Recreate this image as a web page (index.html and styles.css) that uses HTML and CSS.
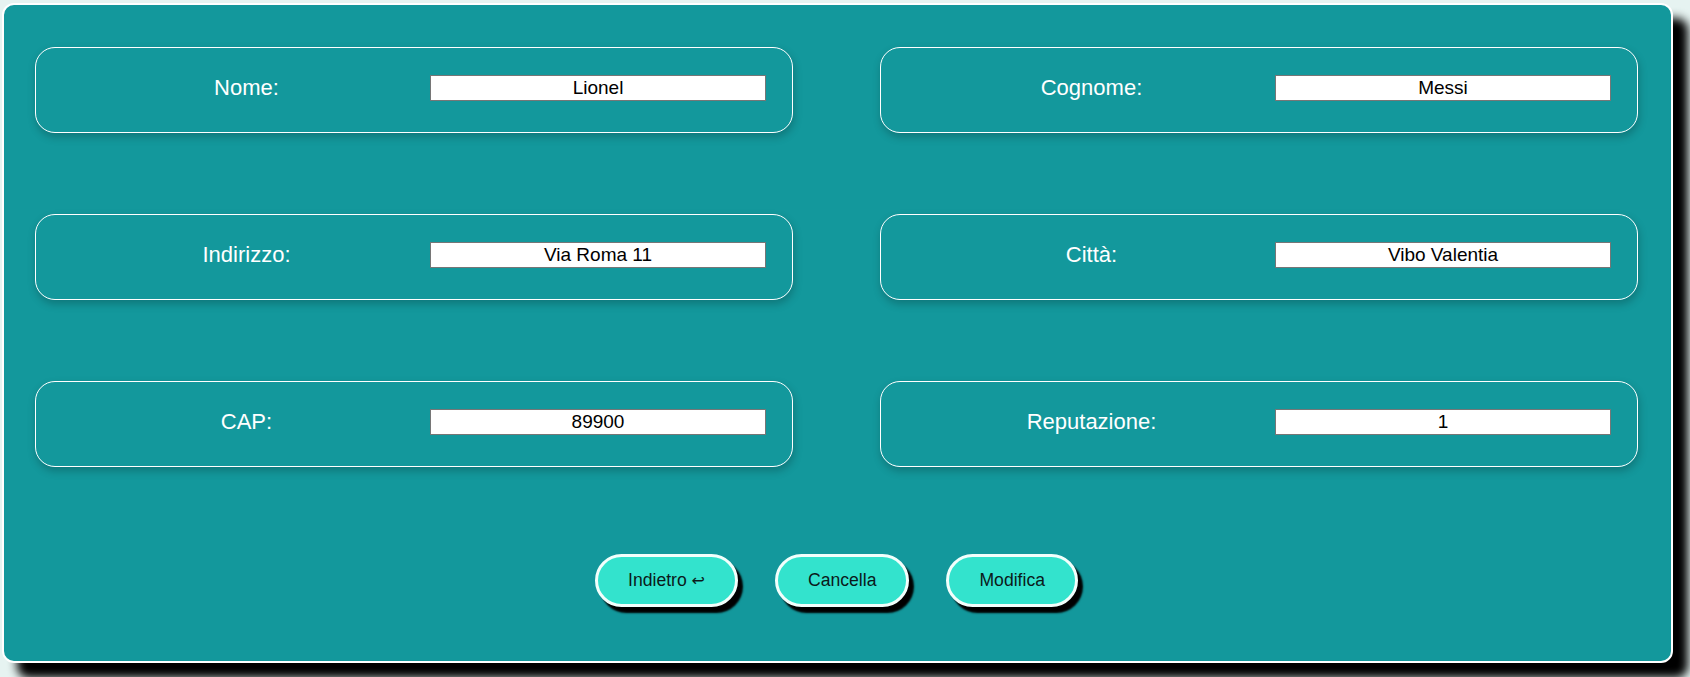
FILE: index.html
```html
<!DOCTYPE html>
<html lang="it">
<head>
<meta charset="utf-8">
<title>Modifica cliente</title>
<link rel="stylesheet" href="styles.css">
</head>
<body>
<form class="card">
  <div class="grid">
    <div class="field"><label class="label">Nome:</label><input class="input" type="text" value="Lionel"></div>
    <div class="field"><label class="label">Cognome:</label><input class="input" type="text" value="Messi"></div>
    <div class="field"><label class="label">Indirizzo:</label><input class="input" type="text" value="Via Roma 11"></div>
    <div class="field"><label class="label">Città:</label><input class="input" type="text" value="Vibo Valentia"></div>
    <div class="field"><label class="label">CAP:</label><input class="input" type="text" value="89900"></div>
    <div class="field"><label class="label">Reputazione:</label><input class="input" type="text" value="1"></div>
  </div>
  <div class="actions">
    <button type="button" class="btn">Indietro <span class="arrow">↩</span></button>
    <button type="button" class="btn">Cancella</button>
    <button type="button" class="btn">Modifica</button>
  </div>
</form>
</body>
</html>
```

FILE: styles.css
```css
html, body {
  margin: 0;
  padding: 0;
}
body {
  background: #e6f3f1;
  font-family: "Liberation Sans", Arial, sans-serif;
  width: 1690px;
  height: 677px;
  overflow: hidden;
}
.card {
  box-sizing: border-box;
  margin: 3px 0 0 2px;
  width: 1671px;
  height: 660px;
  border: 2px solid #ffffff;
  border-radius: 12px;
  background: #13989c;
  box-shadow: 15px 15px 10px #000000;
  padding: 42px 33px 0 31px;
}
.grid {
  display: grid;
  grid-template-columns: 1fr 1fr;
  column-gap: 87px;
  row-gap: 81px;
}
.field {
  box-sizing: border-box;
  height: 86px;
  border: 1px solid #ffffff;
  border-radius: 20px;
  box-shadow: 1px 4px 8px rgba(0, 0, 0, 0.22);
  display: flex;
  align-items: center;
  padding: 0 26px 4px 27px;
}
.label {
  flex: 1;
  text-align: center;
  color: #ffffff;
  font-size: 22px;
}
.input {
  box-sizing: border-box;
  width: 336px;
  height: 26px;
  border: 1px solid #767676;
  background: #ffffff;
  color: #000000;
  text-align: center;
  font-family: "Liberation Sans", Arial, sans-serif;
  font-size: 19px;
  padding: 0 2px;
  margin: 0;
  outline: none;
}
.actions {
  display: flex;
  justify-content: center;
  gap: 37px;
  margin-top: 87px;
}
.btn {
  box-sizing: border-box;
  height: 53px;
  padding: 0 30px;
  border: 3px solid #f2fffc;
  border-radius: 27px;
  background: #33e3cd;
  color: #0b1a1a;
  font-family: "Liberation Sans", Arial, sans-serif;
  font-size: 17.6px;
  box-shadow: 5px 6px 2px #000000;
  cursor: pointer;
}
.arrow {
  font-family: "DejaVu Sans", sans-serif;
  font-size: 16px;
}
```
